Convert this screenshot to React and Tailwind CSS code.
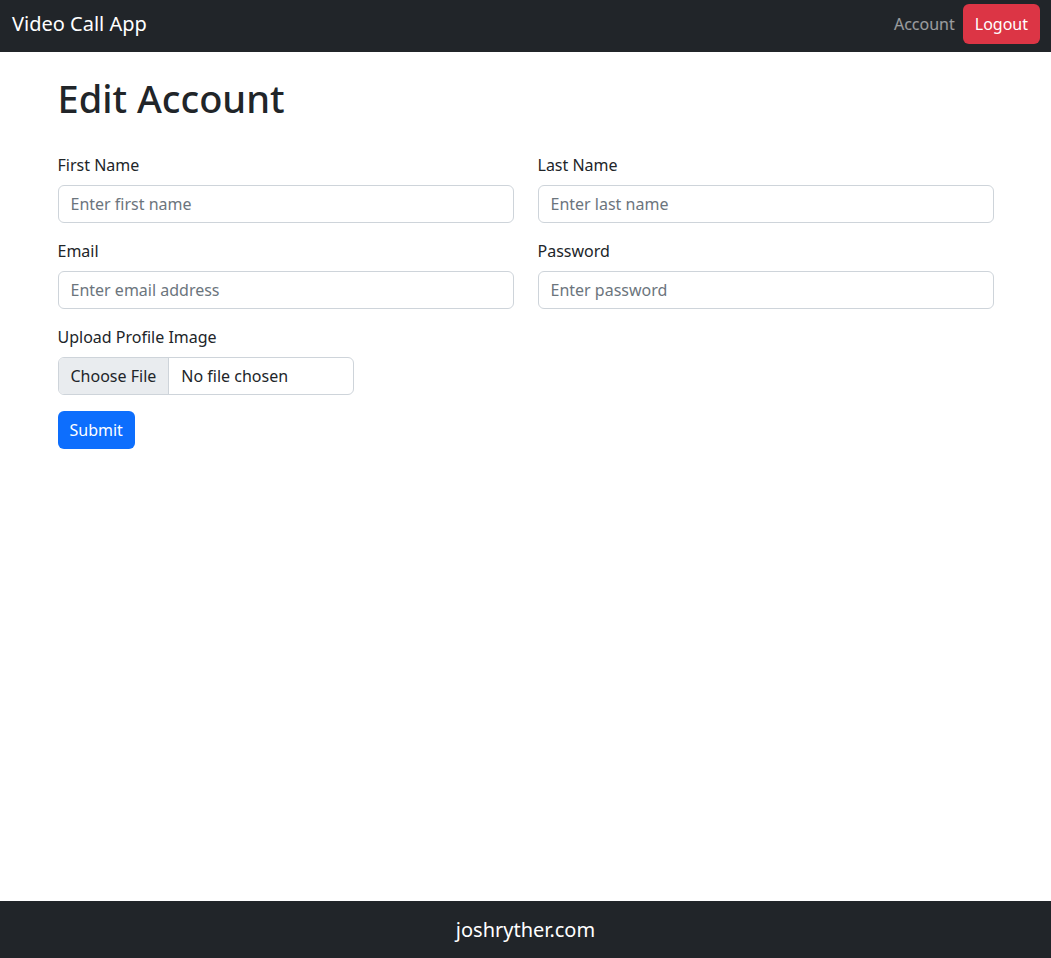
import React from 'react';

const Field = ({ label, placeholder, type = 'text' }) => (
  <div className="mb-4">
    <label className="block mb-2 text-base leading-6 text-[#212529]">{label}</label>
    <input
      type={type}
      placeholder={placeholder}
      className="block w-full h-[38px] px-3 py-1.5 text-base text-[#212529] bg-white border border-[#ced4da] rounded-md placeholder:text-[#6c757d] outline-none"
    />
  </div>
);

export default function App() {
  return (
    <div className="min-h-screen flex flex-col bg-white font-['Noto_Sans',sans-serif]">
      {/* Navbar */}
      <nav className="h-[52px] bg-[#212529] flex items-start justify-between pl-3 pr-[11px] pt-1">
        <a href="#" className="h-10 flex items-center text-xl text-white">Video Call App</a>
        <div className="flex items-center h-10">
          <a href="#" className="px-2 text-base text-white/55">Account</a>
          <button className="h-10 px-3 rounded-md bg-[#dc3545] text-white text-base">Logout</button>
        </div>
      </nav>

      {/* Main */}
      <main className="flex-1">
        <div className="w-[960px] mx-auto px-3">
          <h1 className="mt-6 mb-8 text-[38px] leading-[45px] font-medium text-[#212529]">Edit Account</h1>
          <form>
            <div className="grid grid-cols-2 gap-x-6">
              <Field label="First Name" placeholder="Enter first name" />
              <Field label="Last Name" placeholder="Enter last name" />
              <Field label="Email" placeholder="Enter email address" type="email" />
              <Field label="Password" placeholder="Enter password" type="password" />
            </div>
            <div className="mb-4">
              <label className="block mb-2 text-base leading-6 text-[#212529]">Upload Profile Image</label>
              <div className="flex w-[296px] h-[38px] border border-[#ced4da] rounded-md overflow-hidden text-base text-[#212529]">
                <span className="flex items-center px-3 bg-[#e9ecef] border-r border-[#ced4da]">Choose File</span>
                <span className="flex items-center px-3">No file chosen</span>
              </div>
            </div>
            <button type="button" className="h-[38px] px-3 rounded-md bg-[#0d6efd] text-white text-base">Submit</button>
          </form>
        </div>
      </main>

      {/* Footer */}
      <footer className="h-[57px] bg-[#212529] flex items-center justify-center text-xl text-white">
        joshryther.com
      </footer>
    </div>
  );
}
